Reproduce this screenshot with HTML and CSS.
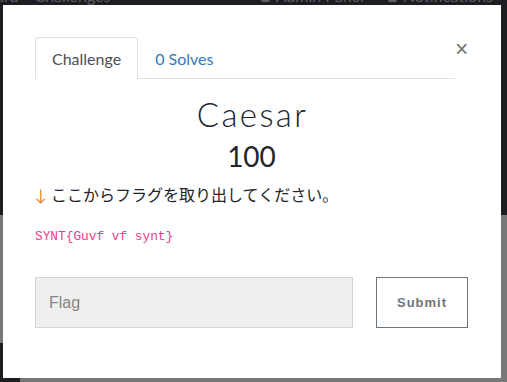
FILE: index.html
```html
<!DOCTYPE html>
<html lang="ja">
<head>
  <meta charset="UTF-8">
  <meta name="viewport" content="width=device-width, initial-scale=1.0">
  <title>Caesar - Challenge</title>
  <link rel="stylesheet" href="styles.css">
</head>
<body>
  <!-- page behind the modal, already dimmed by the backdrop -->
  <div class="page">
    <header class="navbar">
      <div class="nav-left">
        <span>ard</span>
        <span>Challenges</span>
      </div>
      <div class="nav-right">
        <span class="nav-icon"></span><span>Admin Panel</span>
        <span class="nav-icon bell"></span><span>Notifications</span>
      </div>
    </header>
    <div class="jumbotron"></div>
    <div class="content">
      <div class="footer-corner"></div>
    </div>
  </div>

  <div class="modal" role="dialog" aria-labelledby="challenge-name">
    <div class="modal-head">
      <ul class="nav-tabs">
        <li class="tab active">Challenge</li>
        <li class="tab">0 Solves</li>
      </ul>
      <button class="close" aria-label="Close">&times;</button>
    </div>

    <div class="modal-body">
      <h2 id="challenge-name" class="challenge-name">Caesar</h2>
      <h3 class="challenge-value">100</h3>
      <p class="challenge-desc"><span class="arrow">↓</span> ここからフラグを取り出してください。</p>
      <p class="challenge-code"><code>SYNT{Guvf vf synt}</code></p>

      <form class="submit-row" onsubmit="return false">
        <input class="flag-input" type="text" placeholder="Flag">
        <button class="submit-btn" type="submit">Submit</button>
      </form>
    </div>
  </div>
</body>
</html>
```

FILE: styles.css
```css
body {
  margin: 0;
  font-family: 'Lato', 'Noto Sans CJK JP', sans-serif;
  overflow: hidden;
  width: 507px;
  height: 382px;
}

/* Dimmed page */
.page {
  height: 382px;
  background: #787878;
  display: flex;
  flex-direction: column;
}

.navbar {
  display: flex;
  justify-content: space-between;
  margin-top: -14px;
  height: 20px;
  background: #1c1e21;
  color: #5c5f63;
  font-size: 16px;
  line-height: 20px;
}

.nav-left {
  display: flex;
  gap: 16px;
  margin-left: -4px;
}

.nav-right {
  display: flex;
  align-items: center;
  gap: 6px;
  margin-right: 14px;
}

.nav-icon {
  width: 9px;
  height: 12px;
  background: #5c5f63;
  border-radius: 2px;
  margin-left: 18px;
}

.jumbotron {
  height: 209px;
  background: #1c1e21;
}

.content {
  flex: 1;
  position: relative;
}

.footer-corner {
  position: absolute;
  left: 0;
  bottom: 0;
  width: 20px;
  height: 39px;
  background: #1c1e21;
}

/* Modal */
.modal {
  position: absolute;
  left: 3px;
  top: 5px;
  width: 498px;
  height: 373px;
  background: #fff;
  box-sizing: border-box;
  padding: 32px 33px 0 32px;
}

.modal-head {
  display: flex;
  align-items: flex-start;
}

.nav-tabs {
  flex: 1;
  display: flex;
  list-style: none;
  margin: 0;
  padding: 0;
  border-bottom: 1px solid #dee2e6;
}

.tab {
  height: 40px;
  padding: 0 16px;
  font-size: 16px;
  line-height: 41px;
  color: #337ab7;
  border: 1px solid transparent;
  border-bottom: 0;
  border-radius: 4px 4px 0 0;
  margin-bottom: -1px;
}

.tab.active {
  color: #495057;
  background: #fff;
  border-color: #dee2e6;
  height: 41px;
}

.close {
  width: 13px;
  margin: 0;
  padding: 0;
  border: 0;
  background: none;
  font-family: 'Liberation Sans', sans-serif;
  font-size: 23px;
  line-height: 20px;
  color: #777;
  margin-top: 2px;
  text-align: right;
}

.modal-body {
  text-align: center;
}

.challenge-name {
  margin: 16px 0 0;
  padding-left: 2px;
  font-family: 'Lato', sans-serif;
  font-weight: 300;
  font-size: 33px;
  line-height: 38px;
  letter-spacing: 2.4px;
  color: #212529;
}

.challenge-value {
  margin: 6px 0 0;
  font-weight: 400;
  font-size: 28px;
  line-height: 34px;
  color: #212529;
}

.challenge-desc {
  text-align: left;
  margin: 10px 0 0;
  font-size: 16px;
  line-height: 24px;
  color: #212529;
}

.arrow {
  color: #e5862c;
}

.challenge-code {
  text-align: left;
  margin: 18px 0 0;
  line-height: 18px;
}

code {
  font-family: 'Liberation Mono', monospace;
  font-size: 12.8px;
  color: #e83e8c;
}

.submit-row {
  display: flex;
  justify-content: space-between;
  margin-top: 31px;
}

.flag-input {
  width: 318px;
  height: 51px;
  box-sizing: border-box;
  padding: 0 13px;
  background: #efefef;
  border: 1px solid #ced4da;
  font-family: 'Liberation Sans', sans-serif;
  font-size: 16px;
  color: #495057;
}

.flag-input::placeholder {
  color: #868686;
}

.submit-btn {
  width: 92px;
  height: 51px;
  box-sizing: border-box;
  background: #fff;
  border: 1px solid #6c757d;
  font-family: 'Liberation Sans', sans-serif;
  font-weight: bold;
  font-size: 13px;
  letter-spacing: 1px;
  color: #6c757d;
}
```
